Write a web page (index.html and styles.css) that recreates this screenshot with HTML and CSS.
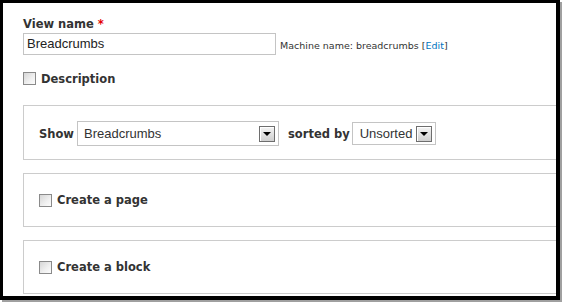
FILE: index.html
```html
<!DOCTYPE html>
<html>
<head>
<meta charset="utf-8">
<link rel="stylesheet" href="styles.css">
</head>
<body>
<div class="frame">
  <div class="content">
    <div class="field-label">View name <span class="req">*</span></div>
    <div class="name-row">
      <div class="text-input">Breadcrumbs</div>
      <div class="machine">Machine name: breadcrumbs [<a class="edit">Edit</a>]</div>
    </div>
    <div class="check-row desc">
      <span class="checkbox"></span>
      <span class="check-label">Description</span>
    </div>
    <div class="fieldset show-set">
      <span class="inline-label">Show</span>
      <div class="select select-wide"><span class="sel-text">Breadcrumbs</span><span class="sel-btn"><span class="tri"></span></span></div>
      <span class="inline-label sorted">sorted by</span>
      <div class="select select-narrow"><span class="sel-text">Unsorted</span><span class="sel-btn"><span class="tri"></span></span></div>
    </div>
    <div class="fieldset">
      <div class="check-row">
        <span class="checkbox"></span>
        <span class="check-label">Create a page</span>
      </div>
    </div>
    <div class="fieldset">
      <div class="check-row">
        <span class="checkbox"></span>
        <span class="check-label">Create a block</span>
      </div>
    </div>
  </div>
</div>
</body>
</html>
```

FILE: styles.css
```css
* { box-sizing: border-box; }
html, body { margin: 0; padding: 0; background: #fff; }
body { width: 563px; height: 304px; overflow: hidden; }

.frame {
  width: 560px;
  height: 300px;
  border-style: solid;
  border-color: #000;
  border-width: 3px 4px 4px 3px;
  box-shadow: 2px 2px 0 #a0a0a0;
  background: #fff;
  overflow: hidden;
  font-family: "DejaVu Sans", Verdana, sans-serif;
  color: #333;
}

.content {
  width: 640px;
  padding: 13px 0 0 20px;
}

.field-label {
  font-weight: bold;
  font-size: 11.5px;
  line-height: 16px;
  height: 16px;
}
.req { color: #e30000; }

.name-row {
  display: flex;
  align-items: center;
  margin-top: 1px;
  height: 22px;
}
.text-input {
  width: 253px;
  height: 22px;
  border: 1px solid #c4c4c4;
  font-family: "Liberation Sans", Arial, sans-serif;
  font-size: 13px;
  line-height: 20px;
  padding-left: 3px;
  color: #222;
}
.machine {
  margin-left: 4px;
  font-size: 9.5px;
  color: #333;
  padding-top: 3px;
}
.edit { color: #0074bd; }

.check-row {
  display: flex;
  align-items: center;
}
.desc { margin-top: 16px; height: 14px; }
.desc .check-label { padding-top: 2px; }
.checkbox {
  width: 13px;
  height: 13px;
  border: 1px solid #8a8a8a;
  background: linear-gradient(135deg, #d6d6d6 0%, #f0f0f0 60%, #fcfcfc 100%);
  flex: none;
}
.check-label {
  font-weight: bold;
  font-size: 11.5px;
  margin-left: 5px;
  line-height: 14px;
}

.fieldset {
  border: 1px solid #cccccc;
  width: 600px;
  height: 54px;
  display: flex;
  align-items: center;
  padding-left: 15px;
  margin-top: 13px;
}
.show-set {
  margin-top: 20px;
  height: 55px;
  padding-top: 2px;
}

.inline-label {
  font-weight: bold;
  font-size: 11.5px;
  margin-right: 3px;
}
.sorted { margin-left: 9px; margin-right: 2px; }

.select {
  display: flex;
  align-items: center;
  border: 1px solid #c4c4c4;
  font-family: "Liberation Sans", Arial, sans-serif;
  font-size: 13px;
  color: #333;
  padding-left: 6px;
  padding-right: 3px;
}
.select-wide { width: 202px; height: 25px; }
.select-narrow { width: 84px; height: 23px; padding-left: 7px; }
.sel-text { flex: 1; }
.sel-btn {
  width: 16px;
  height: 16px;
  border: 1px solid #6e6e6e;
  background: linear-gradient(#f4f4f4, #cfcfcf);
  display: flex;
  align-items: center;
  justify-content: center;
  box-shadow: inset 1px 1px 0 #fff;
}
.tri {
  width: 0;
  height: 0;
  border-left: 4px solid transparent;
  border-right: 4px solid transparent;
  border-top: 4px solid #000;
  margin-top: 1px;
}
```
